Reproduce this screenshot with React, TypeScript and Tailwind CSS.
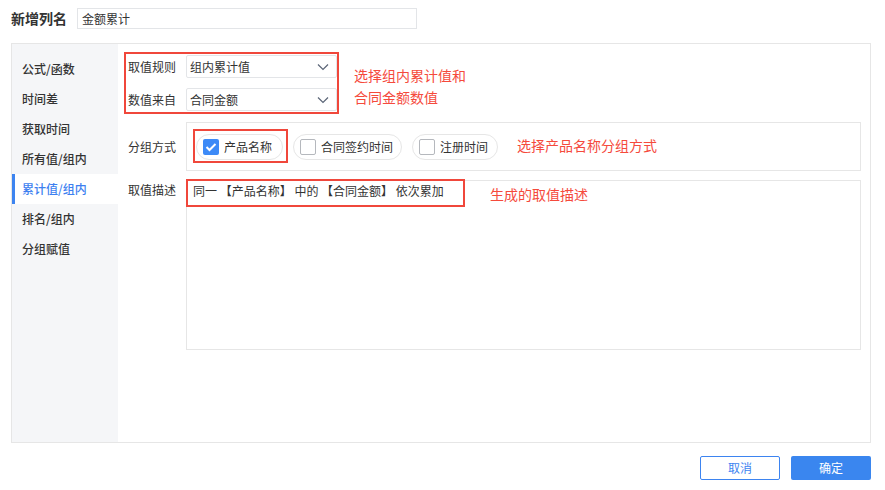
import React from "react";

const font = { fontFamily: '"Noto Sans CJK SC", "Noto Sans", sans-serif' };

function Chevron() {
  return (
    <svg width="12" height="8" viewBox="0 0 12 8" className="text-[#5b6577]">
      <polyline points="1,1.5 6,6.5 11,1.5" fill="none" stroke="currentColor" strokeWidth="1.2" />
    </svg>
  );
}

function Select({ value }: { value: string }) {
  return (
    <div className="w-[151px] h-[23px] border border-[#e3e5e8] rounded-[2px] flex items-center justify-between pl-[3px] pr-[7px] text-[12px] text-[#333]">
      <span>{value}</span>
      <Chevron />
    </div>
  );
}

function Pill({ label, checked, w }: { label: string; checked?: boolean; w: string }) {
  return (
    <div className={`${w} h-[26px] rounded-full border border-[#e6e6e6] flex items-center pl-[6px] gap-[5px] text-[12px] text-[#333]`}>
      {checked ? (
        <div className="w-[16px] h-[16px] rounded-[2px] bg-[#3d8af7] flex items-center justify-center">
          <svg width="12" height="10" viewBox="0 0 12 10">
            <polyline points="1.5,5 4.5,8 10.5,2" fill="none" stroke="white" strokeWidth="2" />
          </svg>
        </div>
      ) : (
        <div className="w-[16px] h-[16px] rounded-[2px] border border-[#b5b8bd] bg-white" />
      )}
      <span>{label}</span>
    </div>
  );
}

export default function App() {
  const items = ["公式/函数", "时间差", "获取时间", "所有值/组内", "累计值/组内", "排名/组内", "分组赋值"];
  return (
    <div className="w-[885px] h-[490px] bg-white relative" style={font}>
      <div className="flex items-center pt-[8px] pl-[11px]">
        <div className="w-[66px] text-[14px] font-bold text-[#333]">新增列名</div>
        <div className="w-[340px] h-[21px] border border-[#e3e5e8] flex items-center pl-[4px] text-[12px] text-[#333]">
          金额累计
        </div>
      </div>

      <div className="ml-[11px] mt-[14px] w-[860px] h-[400px] border border-[#e6e6e6] flex">
        <div className="w-[106px] bg-[#f5f6f8] pt-[10px]">
          {items.map((it) => {
            const active = it === "累计值/组内";
            return (
              <div
                key={it}
                className={
                  active
                    ? "h-[30px] flex items-center pl-[7px] border-l-[3px] border-[#3d84f0] bg-white text-[#3d7ff0] text-[12px] font-medium"
                    : "h-[30px] flex items-center pl-[10px] text-[#333] text-[12px] font-medium"
                }
              >
                {it}
              </div>
            );
          })}
        </div>

        <div className="flex-1 relative pl-[10px] pr-[9px] pt-[11px]">
          <div className="flex items-center">
            <div className="w-[58px] text-[12px] text-[#333]">取值规则</div>
            <Select value="组内累计值" />
          </div>
          <div className="flex items-center mt-[10px]">
            <div className="w-[58px] text-[12px] text-[#333]">数值来自</div>
            <Select value="合同金额" />
          </div>

          <div className="flex items-center mt-[11px]">
            <div className="w-[58px] text-[12px] text-[#333]">分组方式</div>
            <div className="flex-1 h-[49px] border border-[#e6e6e6] flex items-center pl-[9px] gap-[10px]">
              <Pill label="产品名称" checked w="w-[87px]" />
              <Pill label="合同签约时间" w="w-[109px]" />
              <Pill label="注册时间" w="w-[86px]" />
            </div>
          </div>

          <div className="flex mt-[9px]">
            <div className="w-[58px] text-[12px] text-[#333] pt-[1px]">取值描述</div>
            <div className="flex-1 h-[170px] border border-[#e6e6e6] pl-[6px] pt-[1px] text-[12px] text-[#333]">
              同一 【产品名称】 中的 【合同金额】 依次累加
            </div>
          </div>

          <div className="absolute left-[6px] top-[8px] w-[215px] h-[62px] border-2 border-[#f0473b]" />
          <div className="absolute left-[75px] top-[85px] w-[95px] h-[34px] border-2 border-[#f0473b]" />
          <div className="absolute left-[68px] top-[135px] w-[279px] h-[28px] border-2 border-[#f0473b]" />

          <div className="absolute left-[236px] top-[20px] text-[14px] leading-[22px] text-[#f54a3c]">
            选择组内累计值和
            <br />
            合同金额数值
          </div>
          <div className="absolute left-[399px] top-[90px] text-[14px] leading-[22px] text-[#f54a3c]">
            选择产品名称分组方式
          </div>
          <div className="absolute left-[372px] top-[139px] text-[14px] leading-[22px] text-[#f54a3c]">
            生成的取值描述
          </div>
        </div>
      </div>

      <div className="flex justify-end gap-[11px] pr-[14px] mt-[13px]">
        <div className="w-[80px] h-[24px] border border-[#3d84f0] rounded-[2px] flex items-center justify-center text-[12px] text-[#3d84f0]">
          取消
        </div>
        <div className="w-[80px] h-[24px] bg-[#3a86ef] rounded-[2px] flex items-center justify-center text-[12px] text-white">
          确定
        </div>
      </div>
    </div>
  );
}
